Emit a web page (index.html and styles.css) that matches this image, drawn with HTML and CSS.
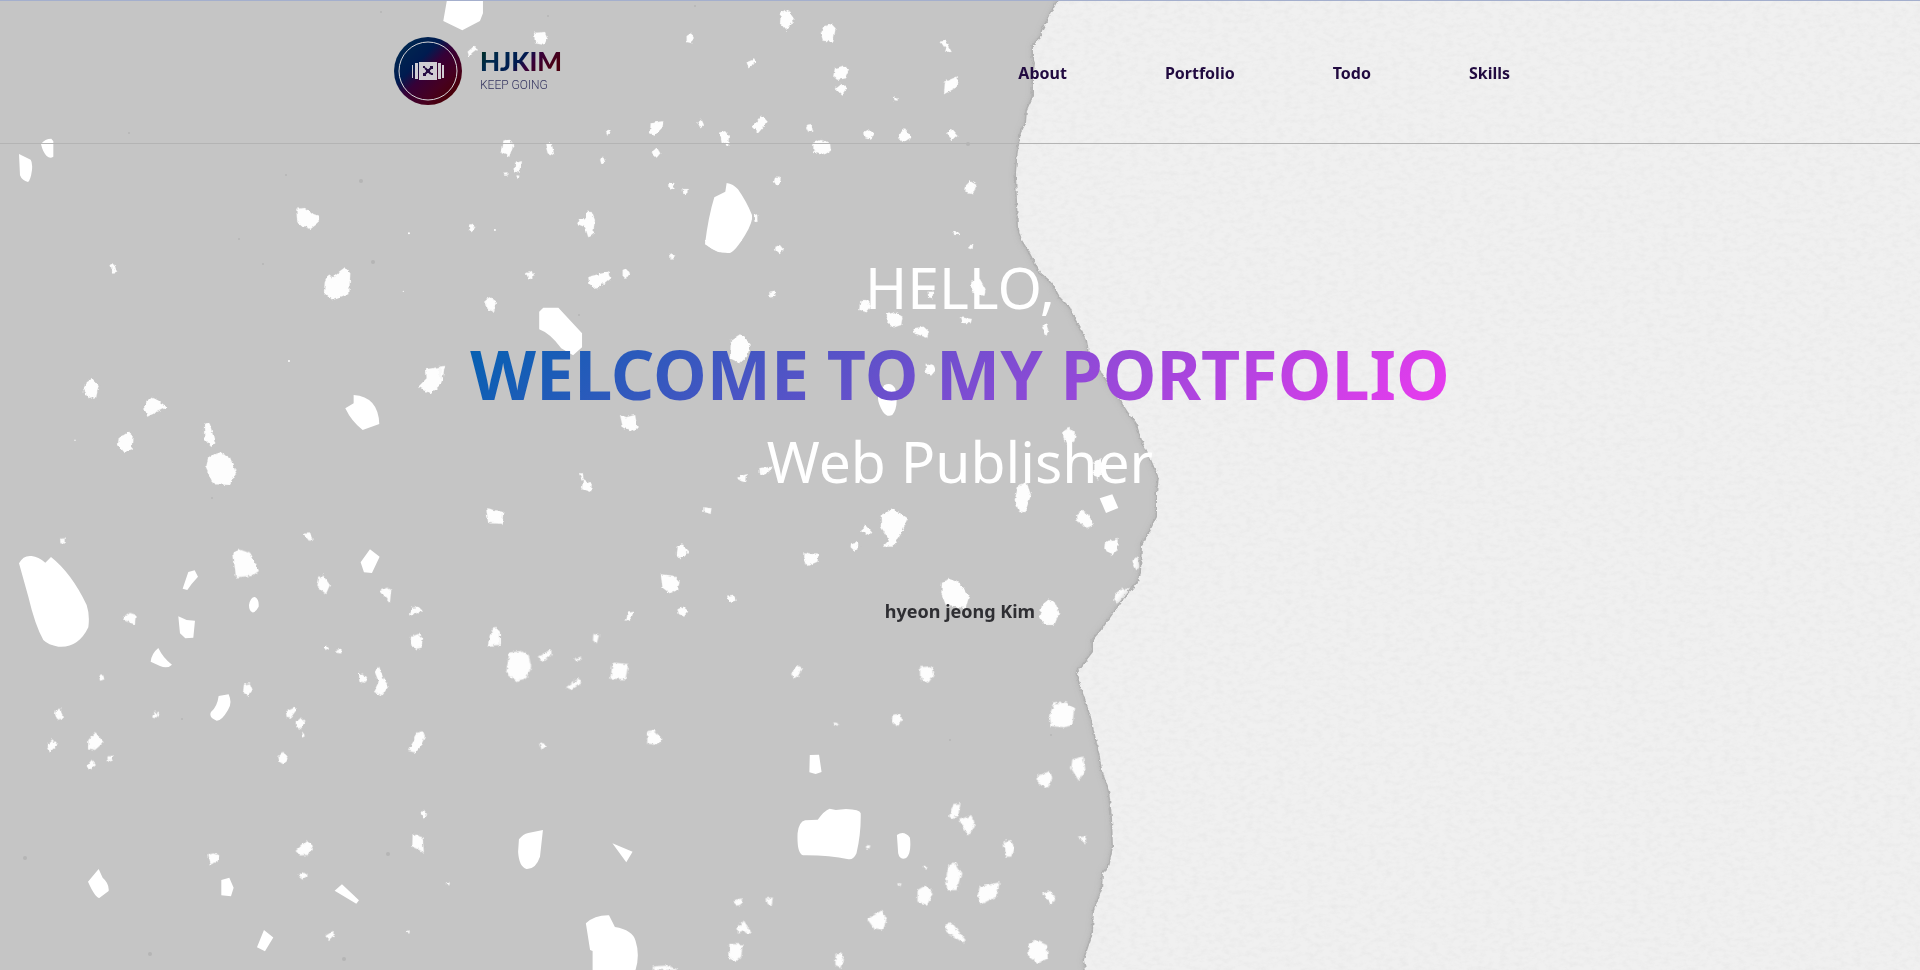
FILE: index.html
```html
<!DOCTYPE html>
<html lang="en">
<head>
<meta charset="utf-8">
<meta name="viewport" content="width=device-width, initial-scale=1">
<title>HJKIM Portfolio</title>
<link rel="stylesheet" href="styles.css">
</head>
<body>
<svg class="backdrop" viewBox="0 0 1920 970" preserveAspectRatio="xMidYMid slice" aria-hidden="true">
  <defs>
    <filter id="ragged" x="-20" y="-20" width="1960" height="1010" filterUnits="userSpaceOnUse">
      <feTurbulence type="fractalNoise" baseFrequency="0.25" numOctaves="2" seed="4" result="n"/>
      <feDisplacementMap in="SourceGraphic" in2="n" scale="4" xChannelSelector="R" yChannelSelector="G"/>
    </filter>
    <filter id="grain" x="0" y="0" width="1920" height="970" filterUnits="userSpaceOnUse">
      <feTurbulence type="fractalNoise" baseFrequency="0.13 0.21" numOctaves="4" seed="8"/>
      <feColorMatrix values="0 0 0 0 0.6  0 0 0 0 0.6  0 0 0 0 0.6  0.35 0 0 0 -0.14"/>
      <feComposite in2="SourceGraphic" operator="in"/>
    </filter>
    <filter id="soft" x="0" y="0" width="1920" height="970" filterUnits="userSpaceOnUse"><feGaussianBlur stdDeviation="3"/></filter>
    <path id="paper" d="M1062 -16 1058 0 1053 10 1048 20 1042 32 1041 38 1033 45 1033 57 1035 63 1033 80 1033 97 1027 110 1026 123 1021 133 1018 150 1016 173 1017 200 1018 227 1022 240 1030 253 1040 272 1052 282 1060 297 1070 307 1076 320 1082 330 1087 340 1089 353 1108 382 1117 395 1128 412 1136 422 1142 440 1150 457 1159 478 1157 493 1157 517 1147 537 1142 545 1141 573 1138 582 1123 600 1103 628 1093 640 1093 652 1077 673 1081 687 1091 717 1100 757 1102 770 1109 790 1112 817 1113 847 1109 867 1103 873 1102 890 1094 910 1093 933 1084 960 1086 970 1088 986H1936V-16Z"/>
  </defs>
  <rect width="1920" height="970" fill="#c5c5c5"/>

  <g fill="#fff">
    <g transform="scale(.3333)">
      <path d="M1341 0 1330 63 1387 91 1440 63 1449 40V0ZM123 432Q135 416 154 416L160 424V470Q150 477 140 468 128 455 123 432ZM57 462 92 479Q98 487 96 510 92 540 84 546 66 542 60 526ZM1061 1185Q1135 1190 1138 1272L1088 1290Q1055 1265 1036 1225L1061 1210Z"/>
      <circle cx="1227" cy="700" r="3"/><circle cx="867" cy="1083" r="3"/><circle cx="1210" cy="874" r="2"/><circle cx="1485" cy="690" r="3"/><circle cx="225" cy="1321" r="2"/>
    </g>
    <path transform="translate(0 490) scale(.3333)" d="M57 220Q70 195 95 198 115 200 136 218L153 201Q215 250 260 345 270 375 265 412 235 475 175 470 145 465 130 450 105 405 85 320ZM296 1137 308 1163Q328 1180 326 1203L298 1224Q285 1222 264 1175ZM792 1320 820 1343 795 1384 771 1372ZM1026 1183 1077 1231 1069 1241 1004 1202ZM656 618 686 613Q698 640 684 660 665 693 650 692 625 682 633 666 652 650 656 618ZM565 246 584 241 594 260 575 282 562 300 548 296ZM535 379 560 390 585 392 580 443 556 445 540 430ZM747 345Q752 320 765 321 778 328 776 350 766 369 757 367 747 362 747 345ZM1110 178 1139 200 1116 249 1092 247 1082 217ZM475 474Q490 505 516 524 502 538 480 528L452 515Q455 490 475 474ZM664 1170 688 1163 701 1193 693 1219 664 1216Z"/>
    <path transform="translate(500 0) scale(.3333)" d="M680 549Q700 552 714 568 740 605 756 645 760 665 735 706 705 755 690 759 655 762 615 733 625 650 643 592L676 575Z"/>
    <path transform="translate(500 600) scale(.4209 .3333)" d="M707 700Q710 665 725 661L755 659Q770 632 783 626L798 630 822 627Q855 628 857 640 858 700 847 760 840 780 828 778 780 765 720 766 705 760 707 700ZM45 718Q55 702 67 699L102 690 95 770Q85 808 63 807 45 800 43 755ZM267 730 315 755 300 787ZM204 970Q225 945 259 946L273 981Q315 990 322 1022 333 1065 322 1110H220V1053L214 1050ZM943 705Q960 690 974 713 978 760 965 774 950 782 946 760ZM736 465 758 464 764 516 750 522 735 517Z"/>
    <path transform="translate(440 240) scale(.4082 .3333)" d="M243 215 253 203H290L348 280V322L326 346 297 325Q270 280 243 268ZM1088 436Q1105 425 1115 445 1125 500 1108 525 1095 533 1085 515 1072 490 1073 470ZM649 0Q650 20 680 35 710 45 740 0Z"/>
    <path transform="translate(1000 240) scale(.3333)" d="M299 775 337 763 355 804 318 819Z"/>
  </g>

  <g class="stones" filter="url(#ragged)">
    <path transform="translate(0 0) scale(.3333)" d="M889 626 915 624 935 640 957 648 956 668 932 687 892 670ZM985 825 995 832 1035 802 1051 820 1048 880 998 901 972 875 975 845ZM332 795 342 790 351 816 337 818ZM1403 155 1420 140 1434 145 1415 160 1408 172ZM1407 675 1420 671 1426 682 1415 697 1407 688ZM1458 898 1475 890 1486 905 1483 935 1465 930 1456 915ZM258 1145 275 1134 296 1155 288 1192 268 1197 250 1172ZM440 1205 458 1191 502 1221 442 1250 432 1220ZM356 1315 385 1296 398 1308 395 1347 372 1356 354 1335ZM612 1275 628 1266 646 1330 634 1341 613 1318ZM1278 1108 1335 1098 1325 1150 1293 1182 1255 1160 1280 1135ZM625 1370 660 1358 690 1372 709 1420 688 1455 640 1453 618 1405Z"/>
    <path transform="translate(0 490) scale(.3333)" d="M180 146 194 145 194 160 182 160ZM700 190 715 177 752 190 777 243 757 257 708 262ZM366 387 390 369 407 374 405 404ZM910 131 930 130 938 148 930 156ZM957 265 967 253 990 285 978 312 952 290ZM1140 302 1162 293 1174 300 1170 337ZM1227 372 1236 353 1256 351 1268 363 1230 377ZM1485 410 1500 425V465L1463 468 1470 435ZM1462 58 1500 66V98L1472 100ZM1233 440 1256 432 1269 447 1264 474 1243 478 1232 460ZM972 475 980 467 987 477 977 483ZM1006 482 1025 477 1024 490 1008 488ZM1077 546 1102 565 1095 578 1078 575ZM1124 545 1138 531 1150 565 1166 588 1145 620 1122 605 1136 575ZM298 558 310 556 313 568 300 572ZM732 583 750 580 758 600 745 618 729 607ZM168 660 182 656 189 685 171 690 165 672ZM457 675 465 665 478 672 473 685 458 684ZM858 665 885 652 888 662 872 684 860 681ZM887 697 903 683 918 697 902 717 889 711ZM904 730 912 730 914 739 906 742ZM140 765 157 748 173 765 150 785ZM265 750 287 727 311 757 285 780 264 775ZM259 830 275 810 288 825 273 838ZM322 800 341 797 335 811 324 815ZM835 800 850 786 863 805 852 824 838 815ZM1248 728 1268 724 1275 740 1260 772 1247 788 1224 782 1240 755ZM1262 970 1272 960 1282 973 1273 988ZM1238 1032 1268 1042 1272 1087 1237 1070ZM887 1083 920 1052 939 1068 925 1095 900 1096ZM622 1095 640 1090 658 1096 653 1115 630 1124ZM895 1158 912 1148 924 1156 907 1168ZM976 1338 1000 1323 1005 1333 987 1350ZM1221 1322H1229V1330H1221ZM1341 1177H1349V1185H1341Z"/>
    <path transform="translate(500 0) scale(.3333)" d="M102 98 135 96 143 115 132 135 105 130ZM560 108 575 98 582 112 575 130 560 126ZM843 38 855 30 868 35 884 60 860 92 840 70ZM970 80 995 72 1007 85 1000 125 968 122 962 100ZM1322 125 1336 122 1355 155 1343 157ZM740 187 762 178 768 187 745 202ZM1005 205 1030 197 1047 208 1035 235 1012 240 1000 228ZM1005 265 1025 249 1040 263 1026 286ZM1335 245 1374 229 1370 262 1332 283ZM1182 293 1193 292 1193 305 1184 304ZM755 380 785 345 803 365 775 399ZM452 370 490 363 488 382 465 406 450 400ZM592 365 605 359 612 375 600 382ZM318 392 327 388 331 400 323 407ZM660 398 675 393 687 408 685 437 665 425ZM917 378 935 375 938 390 926 399ZM1093 395 1108 388 1121 402 1113 419 1096 415ZM1198 400 1215 388 1234 412 1208 429 1195 415ZM1342 400 1358 388 1373 405 1355 421ZM10 425 28 419 40 435 28 470 5 460ZM135 430 155 430 163 466 143 460ZM940 428 963 420 990 428 993 452 975 463 940 455ZM455 458 472 445 481 460 470 473ZM300 478 310 470 315 485 305 495ZM45 490 63 484 58 518 44 515ZM11 518 22 517 22 527 13 527ZM50 526 58 527 56 536 50 534ZM508 545 520 550 520 570 508 563ZM548 567 563 567 562 582 550 582ZM825 530 843 530 840 550 830 557 822 545ZM257 635 275 636 285 660 280 700 265 712 255 682 232 672 238 655 255 655ZM760 645 775 643 775 660 765 665ZM1395 560 1410 543 1430 555 1420 580 1393 575ZM510 757 526 770 512 779ZM825 745 840 736 850 748 838 762ZM1358 698 1368 693 1380 705 1360 705ZM1408 735 1420 735 1417 747 1409 745ZM78 820 98 812 103 828 87 840ZM265 830 325 815 331 835 290 868 268 852ZM368 810 380 805 390 820 378 837 368 827ZM808 877 823 875 825 890 810 892ZM1414 842 1440 837 1457 868 1453 888 1414 873ZM1283 875 1300 875 1298 895 1285 892Z"/>
    <path transform="translate(440 240) scale(.4082 .3333)" d="M822 20 832 15 842 30 832 42 822 32ZM563 38 577 48 568 60ZM112 178 125 170 137 190 130 213 113 200ZM808 155 820 152 822 170 808 172ZM1030 180 1045 180 1057 200 1045 217 1027 210ZM1095 222 1115 216 1133 230 1130 255 1110 263 1094 245ZM1276 232 1303 237 1300 250 1280 249ZM1160 265 1185 260 1198 275 1193 293 1162 280ZM1474 255 1485 253 1492 275 1485 287ZM713 300 735 283 761 313 752 350 735 370 710 355ZM1190 375 1208 373 1215 390 1203 407 1190 395ZM441 525 455 532 478 525 484 565 470 572 448 563ZM340 700 350 700 352 718 372 732 370 755 348 745 350 722ZM0 380 13 378 5 410 0 412ZM782 685 800 682 817 680 803 698 785 707ZM728 710 752 703 750 728 735 722ZM113 805 155 815 153 852 118 848ZM645 802 665 805 663 822 645 815ZM1080 825 1110 807 1146 837 1130 880 1110 920 1085 920 1100 900 1080 860ZM1029 872 1043 857 1057 875 1052 885ZM1007 910 1020 906 1028 920 1015 932 1006 922ZM580 920 593 910 608 935 590 958 578 943ZM893 937 927 945 925 965 900 978 892 955ZM541 1003 558 1005 575 1008 587 1025 583 1050 563 1060 545 1043ZM703 1067 720 1064 724 1082 708 1087ZM1230 1025 1248 1017 1275 1030 1296 1070 1288 1105 1240 1098 1228 1060ZM582 1108 596 1100 608 1113 598 1130 585 1122ZM460 1118 474 1115 467 1140 455 1145ZM1297 15 1306 15 1304 27 1298 25ZM1475 1095 1490 1079 1505 1085 1517 1120 1505 1155 1482 1155 1468 1130Z"/>
    <path transform="translate(1000 240) scale(.3333)" d="M190 572 205 561 228 580 223 605 200 612 190 595ZM55 735 80 727 93 765 75 818 57 815 44 780ZM280 670 302 655 312 680 295 718 280 705ZM228 822 248 810 264 822 280 857 258 864 245 850 230 842ZM315 905 353 897 352 930 335 947 313 927ZM397 962 412 948 419 980 410 992 404 980ZM347 1060 365 1047 392 1047 372 1078 350 1091 343 1078Z"/>
    <path transform="translate(500 600) scale(.4209 .3333)" d="M22 158 50 153 68 165 74 200 62 235 40 243 15 220ZM90 170 122 148 122 165 103 187ZM222 102 235 106 230 129 221 122ZM177 176 195 170 192 180 180 182ZM268 188 305 192 298 238 262 236ZM157 262 187 235 193 250 170 269ZM705 195 717 203 710 225 698 236 692 222ZM998 202 1025 198 1030 225 1018 248 998 235ZM1305 345 1317 310 1345 307 1364 325 1360 375 1340 382 1310 378ZM935 345 950 340 955 360 945 378 933 370ZM792 367 803 370 798 378ZM350 393 365 390 386 418 372 435 350 430ZM93 432 103 429 109 440 99 449ZM1360 478 1385 470 1391 510 1375 542 1357 505ZM1277 528 1307 513 1312 535 1300 563 1278 550ZM1077 612 1094 610 1089 645 1075 656 1067 650ZM1090 660 1120 645 1128 680 1112 706ZM1196 725 1212 720 1222 740 1215 770 1203 770ZM1373 713 1394 708 1390 730ZM870 735 880 737 877 746 870 744ZM1066 795 1080 787 1096 820 1085 870 1062 870 1060 835ZM1007 797 1016 800 1010 810ZM946 850 954 851 950 860ZM992 870 1013 855 1028 880 1015 915 992 905ZM1140 860 1187 847 1180 890 1142 913 1135 885ZM1290 880 1307 873 1321 893 1310 915ZM558 900 575 895 573 915 558 917ZM633 895 648 893 646 915 636 912ZM873 958 908 930 918 960 910 992 890 988ZM564 985 577 961 598 1000 588 1000 580 990 566 998ZM545 1032 576 1033 573 1070 560 1086 545 1075ZM1059 972 1075 970 1106 1020 1103 1030 1060 995ZM1257 1030 1275 1021 1299 1035 1302 1075 1278 1089 1255 1070ZM797 1065 810 1060 817 1080 808 1104 797 1098ZM363 1100 395 1097 420 1107V1110H363Z"/>
  </g>

  <g class="specks">
    <circle cx="381" cy="12" r="1"/><circle cx="286" cy="175" r="1"/><circle cx="361" cy="181" r="2"/><circle cx="239" cy="239" r="1"/><circle cx="263" cy="264" r="1"/><circle cx="373" cy="262" r="2"/><circle cx="25" cy="858" r="2"/><circle cx="388" cy="854" r="2"/><circle cx="344" cy="959" r="2"/><circle cx="150" cy="954" r="2"/><circle cx="212" cy="498" r="1"/><circle cx="182" cy="719" r="1"/><circle cx="548" cy="16" r="1"/><circle cx="695" cy="6" r="1"/><circle cx="968" cy="144" r="2"/><circle cx="950" cy="740" r="1"/><circle cx="1051" cy="735" r="1"/><circle cx="579" cy="315" r="1"/><circle cx="129" cy="133" r="1"/>
  </g>

  <use href="#paper" class="torn-shadow" filter="url(#soft)"/>
  <g filter="url(#ragged)">
    <use href="#paper" class="torn-edge"/>
    <use href="#paper" class="paper"/>
  </g>
  <use href="#paper" fill="#fff" filter="url(#grain)"/>
</svg>

<header class="header">
  <div class="header-inner">
    <a class="logo" href="#">
      <svg class="logo-mark" viewBox="0 0 68 68" aria-hidden="true">
        <defs><linearGradient id="mark" x1="0" y1="0" x2="1" y2="1"><stop offset=".12" stop-color="#002850"/><stop offset=".36" stop-color="#001b50"/><stop offset=".5" stop-color="#360037"/><stop offset=".7" stop-color="#460020"/><stop offset=".9" stop-color="#4b0000"/></linearGradient></defs>
        <circle cx="34" cy="34" r="34" fill="url(#mark)"/>
        <circle cx="34" cy="34" r="29" fill="none" stroke="#d5d5d8" stroke-width="1"/>
        <path fill="#d0cdd3" d="M18 28h1v13h-1zM21 26h3v16h-3zM25 25h18v18H25zM44 26h3v16h-3zM48 28h2v13h-2z"/>
        <path stroke="#270d45" stroke-width="2" fill="none" d="m31 31 6 6m1-7-8 8"/>
        <path fill="#270d45" d="M36 29h3v3h-3zM29 36h3v3h-3zM37 36h2v2h-2zM29 29h2v2h-2zM32 32h4v4h-4z"/>
      </svg>
      <span class="logo-text">
        <strong class="logo-name">HJKIM</strong>
        <span class="logo-tagline">KEEP GOING</span>
      </span>
    </a>
    <nav class="nav">
      <a href="#about">About</a>
      <a href="#portfolio">Portfolio</a>
      <a href="#todo">Todo</a>
      <a href="#skills">Skills</a>
    </nav>
  </div>
</header>

<main class="hero">
  <p class="hero-line">HELLO,</p>
  <h1 class="hero-title">WELCOME TO MY PORTFOLIO</h1>
  <p class="hero-line">Web Publisher</p>
  <p class="hero-name">hyeon jeong Kim</p>
</main>
</body>
</html>
```

FILE: styles.css
```css
* {
  box-sizing: border-box;
  margin: 0;
  padding: 0;
}

body {
  min-height: 100vh;
  font-family: "Noto Sans", "Open Sans", sans-serif;
  color: #2f2f33;
  overflow-x: hidden;
}

a {
  color: inherit;
  text-decoration: none;
}

.backdrop {
  position: fixed;
  inset: 0;
  z-index: -1;
  width: 100%;
  height: 100%;
}

.stones { fill: #fdfdfd; stroke: #e2e2e2; stroke-width: 1; }
.specks { fill: #b5b5b5; }
.torn-shadow { fill: #a8a8a8; }
.torn-edge { fill: #f3f3f3; stroke: #b0b0b0; stroke-width: 3; }
.paper { fill: #f0f0f0; }

.header {
  border-top: 1px solid #a4afcd;
  border-bottom: 1px solid #b4b4b4;
}

.header-inner {
  display: flex;
  align-items: center;
  justify-content: space-between;
  max-width: 1200px;
  height: 142px;
  margin: 0 auto;
  padding: 0 50px 2px 34px;
}

.logo {
  display: flex;
  align-items: center;
  gap: 18px;
}

.logo-mark {
  width: 68px;
  height: 68px;
}

.logo-text {
  display: flex;
  flex-direction: column;
}

.logo-name {
  font-family: Lato, sans-serif;
  font-size: 26px;
  font-weight: 900;
  line-height: 28px;
  background: linear-gradient(135deg, #00301c 0%, #002850 25%, #001b50 48%, #36003c 60%, #4b0010 85%);
  background-clip: text;
  color: transparent;
}

.logo-tagline {
  font-family: Roboto, sans-serif;
  font-size: 12px;
  font-weight: 300;
  line-height: 20px;
  color: #34345f;
}

.nav {
  display: flex;
  gap: 98px;
  padding-top: 4px;
  font-size: 16px;
  font-weight: 700;
  line-height: 24px;
  color: #210a40;
}

.hero {
  display: flex;
  flex-direction: column;
  align-items: center;
  padding: 103px 24px 48px;
  text-align: center;
}

.hero-line {
  font-size: 57px;
  line-height: 80px;
  color: #fff;
}

.hero-title {
  font-size: 68px;
  font-weight: 700;
  line-height: 94px;
  background: linear-gradient(135deg, #0061b0, #ee3af0);
  background-clip: text;
  color: transparent;
}

.hero-name {
  margin-top: 98px;
  font-size: 18px;
  font-weight: 700;
  line-height: 24px;
}
```
